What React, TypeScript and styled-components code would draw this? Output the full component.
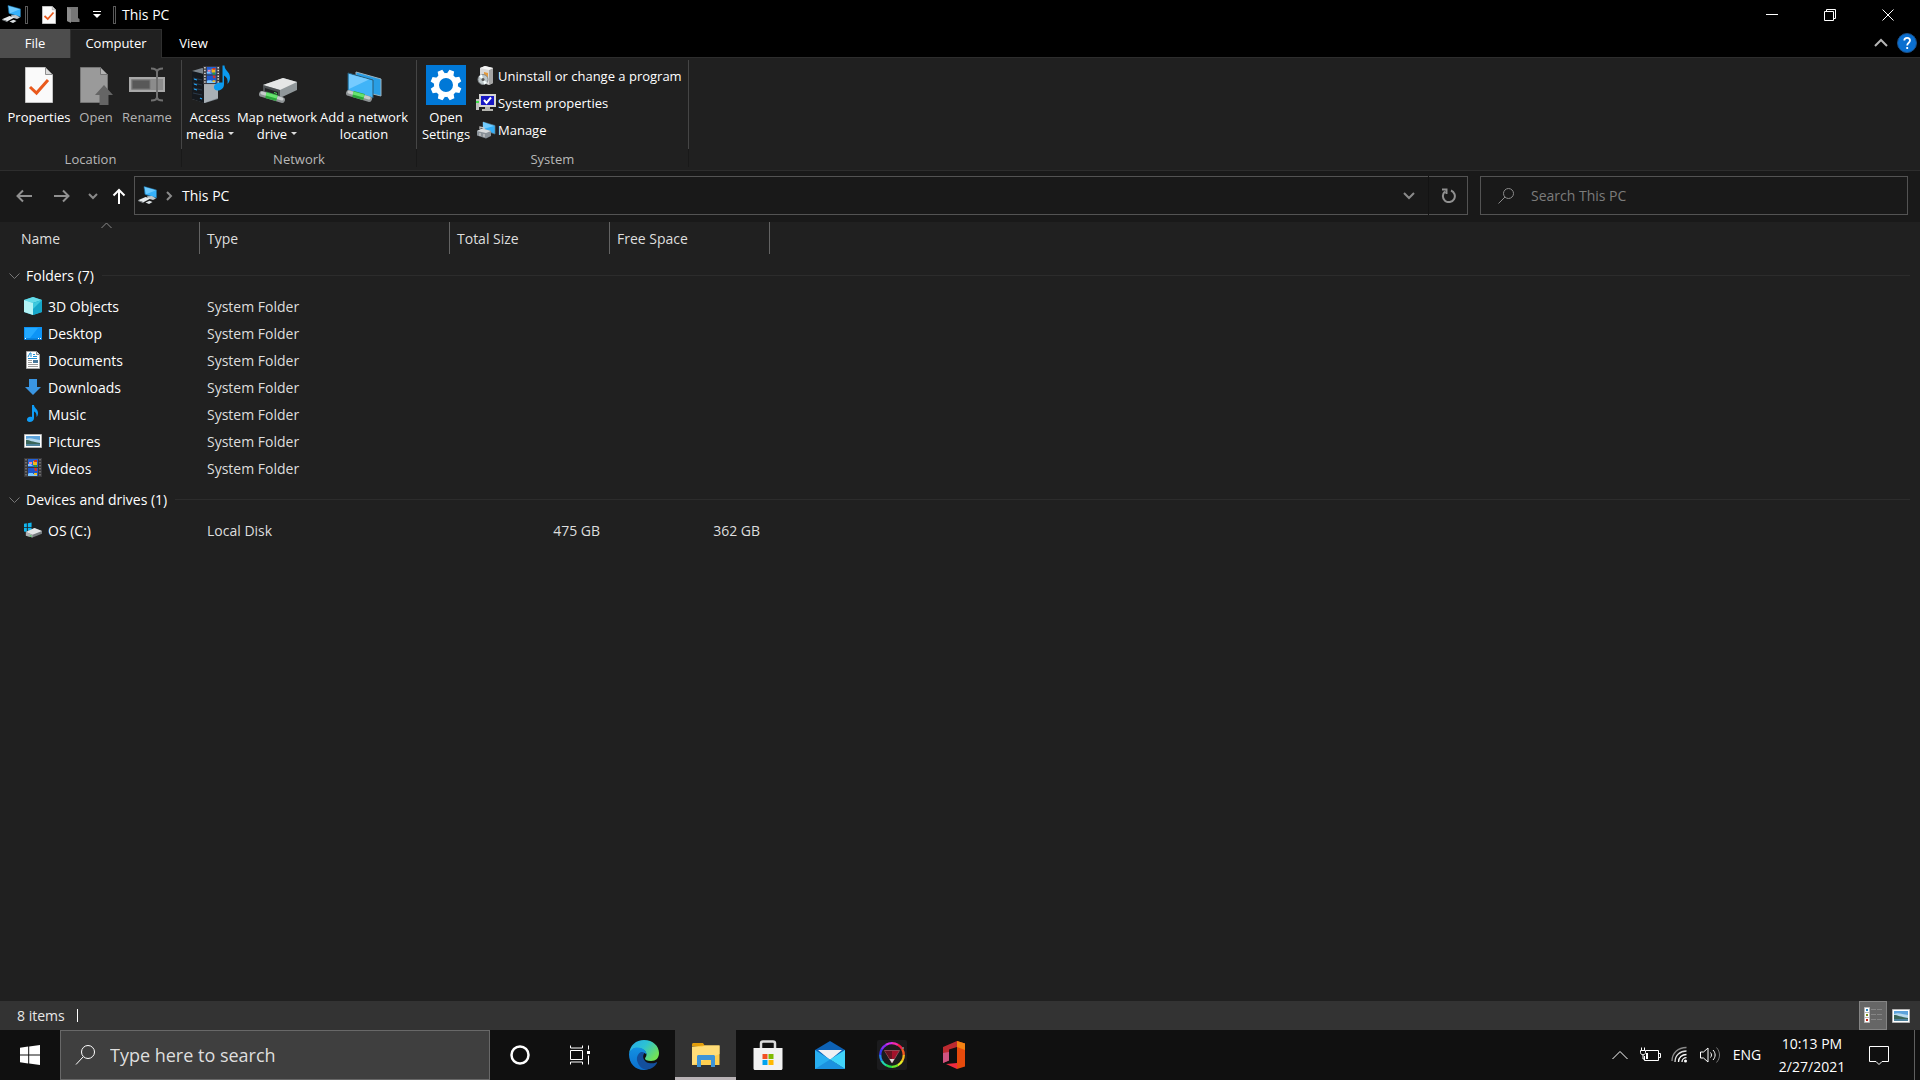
import React from "react";
import styled, { createGlobalStyle } from "styled-components";

const GlobalStyle = createGlobalStyle`
  *, *::before, *::after { box-sizing: border-box; }
  html, body { margin: 0; padding: 0; background: #202020; }
  body, button, input, table {
    font-family: "Open Sans", "Noto Sans", sans-serif;
    font-size: 14px;
    line-height: 20px;
    color: #ffffff;
  }
  button { background: none; border: 0; padding: 0; margin: 0; cursor: default; }
  svg { display: block; flex: none; }
`;

const Page = styled.div`
  min-height: 100vh;
  display: flex;
  flex-direction: column;
`;

/* ---------- title bar ---------- */

const TitleBar = styled.header`
  height: 29px;
  display: flex;
  align-items: center;
  background: #000000;
  padding: 0 3px 0 2px;
`;

const QuickDivider = styled.span`
  width: 3px;
  height: 18px;
  border: 1px solid #5a5a5a;
  margin: 0 6px 0 4px;
`;

const QuickButton = styled.button`
  width: 24px;
  height: 28px;
  display: flex;
  align-items: center;
  justify-content: center;
`;

const QuickTools = styled.div`
  display: flex;
  align-items: center;
  padding-left: 3px;
`;

const Title = styled.h1`
  flex: 1;
  margin: 0;
  font-size: 14px;
  font-weight: 400;
  line-height: 20px;
`;

const CaptionButton = styled.button`
  width: 58px;
  height: 28px;
  display: flex;
  align-items: center;
  justify-content: center;
`;

/* ---------- ribbon ---------- */

const TabRow = styled.nav`
  height: 28px;
  display: flex;
  background: #000000;
`;

const Tab = styled.button<{ $kind: "file" | "active" | "plain" }>`
  font-size: 13px;
  height: 29px;
  margin-bottom: -1px;
  padding-bottom: 2px;
  position: relative;
  width: ${(p) => (p.$kind === "file" ? 70 : p.$kind === "active" ? 92 : 63)}px;
  background: ${(p) => (p.$kind === "file" ? "#4d4d4d" : p.$kind === "active" ? "#202020" : "transparent")};
  border: ${(p) => (p.$kind === "active" ? "1px solid #2f2f2f" : "0")};
  border-bottom: 0;
`;

const TabTools = styled.div`
  margin-left: auto;
  padding-right: 3px;
  display: flex;
  align-items: center;
  gap: 9px;
`;

const Ribbon = styled.section`
  display: flex;
  height: 114px;
  background: #202020;
  border-top: 1px solid #2d2d2d;
  border-bottom: 1px solid #2d2d2d;
`;

const RibbonGroup = styled.div`
  display: flex;
  flex-direction: column;
`;

const GroupBody = styled.div<{ $start: number; $end: number }>`
  flex: 1;
  display: flex;
  padding: 0 ${(p) => p.$end}px 0 ${(p) => p.$start}px;
`;

const GroupLabel = styled.div`
  height: 21px;
  font-size: 13px;
  text-align: center;
  color: #b8b8b8;
`;

const Separator = styled.span`
  width: 1px;
  margin: 2px 0 3px;
  background: linear-gradient(#454545 0 89px, #191919 89px);
`;

const LargeButton = styled.button<{ $width: number; $disabled?: boolean }>`
  width: ${(p) => p.$width}px;
  padding-top: 7px;
  display: flex;
  flex-direction: column;
  align-items: center;
  gap: 4px;
  font-size: 13px;
  line-height: 17px;
  white-space: nowrap;
  color: ${(p) => (p.$disabled ? "#b4b4b4" : "#ffffff")};
`;

const Caret = styled.i`
  display: inline-block;
  vertical-align: 4px;
  margin-left: 4px;
  border: 3px solid transparent;
  border-top-color: #dddddd;
  border-bottom: 0;
`;

const SmallList = styled.div`
  display: flex;
  flex-direction: column;
  padding: 4px 0 0 4px;
`;

const SmallButton = styled.button`
  height: 27px;
  display: flex;
  align-items: center;
  gap: 2px;
  font-size: 13px;
  white-space: nowrap;
`;

/* ---------- address bar ---------- */

const AddressRow = styled.div`
  height: 51px;
  display: grid;
  grid-template-columns: auto minmax(0, 1334fr) minmax(0, 440fr);
  align-items: start;
  background: #191919;
  padding: 5px 12px 0 5px;
`;

const NavButtons = styled.div`
  display: flex;
`;

const NavButton = styled.button<{ $width: number }>`
  width: ${(p) => p.$width}px;
  height: 39px;
  display: flex;
  align-items: center;
  justify-content: center;
`;

const AddressBox = styled.div`
  height: 39px;
  display: flex;
  align-items: center;
  border: 1px solid #535353;
  padding-left: 3px;
`;

const Crumb = styled.button`
  height: 37px;
  display: flex;
  align-items: center;
`;

const CrumbArrow = styled.span`
  width: 25px;
  display: flex;
  justify-content: center;
`;

const AddressSpacer = styled.span`
  flex: 1;
`;

const RefreshCell = styled.div`
  border-left: 1px solid #131313;
  display: flex;
`;

const SearchBox = styled.label`
  height: 39px;
  margin-left: 12px;
  padding-left: 16px;
  display: flex;
  align-items: center;
  gap: 16px;
  border: 1px solid #535353;
`;

const PlainInput = styled.input<{ $hint: string; $size: number }>`
  flex: 1;
  min-width: 0;
  background: none;
  border: 0;
  outline: 0;
  padding: 0;
  font-size: ${(p) => p.$size}px;
  line-height: 24px;
  height: 24px;
  &::placeholder { color: ${(p) => p.$hint}; opacity: 1; }
`;

/* ---------- file list ---------- */

const Content = styled.main`
  flex: 1;
  background: #202020;
`;

const FileTable = styled.table`
  width: 100%;
  table-layout: fixed;
  border-collapse: collapse;
`;

const Col = styled.col<{ $width?: number }>`
  width: ${(p) => (p.$width ? `${p.$width}px` : "auto")};
`;

const HeadCell = styled.th`
  padding: 0 0 4px;
  font-weight: 400;
  text-align: left;
`;

const HeadButton = styled.button<{ $inset: number }>`
  width: 100%;
  height: 32px;
  padding: 2px 0 0 ${(p) => p.$inset}px;
  border-right: 1px solid #636363;
  color: #dedede;
  text-align: left;
  position: relative;
`;

const SortMark = styled.span`
  position: absolute;
  top: 0;
  left: 0;
  right: 0;
  display: flex;
  justify-content: center;
  padding-left: 14px;
`;

const GroupCell = styled.th`
  height: 35px;
  padding: 0 10px 0 9px;
  font-weight: 400;
  text-align: left;
`;

const GroupTitle = styled.button`
  width: 100%;
  display: flex;
  align-items: center;
  gap: 6px;
  &::after {
    content: "";
    flex: 1;
    height: 1px;
    margin-left: 2px;
    background: #2c2c2c;
  }
`;

const NameCell = styled.td`
  height: 27px;
  padding: 0 0 0 24px;
`;

const NameLine = styled.div`
  display: flex;
  align-items: center;
  gap: 6px;
  svg { margin-bottom: 2px; }
`;

const DataCell = styled.td<{ $right?: boolean }>`
  height: 27px;
  padding: 0 ${(p) => (p.$right ? 10 : 0)}px 0 ${(p) => (p.$right ? 0 : 7)}px;
  text-align: ${(p) => (p.$right ? "right" : "left")};
  color: #dedede;
`;

/* ---------- status bar ---------- */

const StatusBar = styled.footer`
  height: 29px;
  display: flex;
  align-items: center;
  background: #333333;
  padding: 0 5px 0 17px;
`;

const StatusText = styled.span`
  flex: 1;
  display: flex;
  align-items: center;
  gap: 12px;
  color: #e8e8e8;
  &::after {
    content: "";
    width: 1px;
    height: 13px;
    background: #ffffff;
  }
`;

const ViewButton = styled.button<{ $active?: boolean }>`
  width: 28px;
  height: 29px;
  display: flex;
  align-items: center;
  justify-content: center;
  background: ${(p) => (p.$active ? "#666666" : "transparent")};
  border: 1px solid ${(p) => (p.$active ? "#848484" : "transparent")};
`;

/* ---------- taskbar ---------- */

const Taskbar = styled.div`
  height: 50px;
  display: flex;
  align-items: stretch;
  background: #101010;
`;

const TaskButton = styled.button<{ $active?: boolean; $width: number }>`
  width: ${(p) => p.$width}px;
  display: flex;
  align-items: center;
  justify-content: center;
  background: ${(p) => (p.$active ? "#333333" : "transparent")};
  box-shadow: ${(p) => (p.$active ? "inset 0 -3px #b9b3b6" : "none")};
`;

const TaskSearch = styled.label`
  width: 430px;
  display: flex;
  align-items: center;
  gap: 14px;
  padding-left: 14px;
  background: #3f3f3f;
  border: 1px solid #686868;
`;

const Apps = styled.div`
  display: flex;
  gap: 1px;
  margin-left: 3px;
`;

const Tray = styled.div`
  display: flex;
  margin-left: auto;
`;

const TrayText = styled.button<{ $width: number }>`
  width: ${(p) => p.$width}px;
  display: flex;
  flex-direction: column;
  align-items: center;
  justify-content: center;
  gap: 3px;
  white-space: nowrap;
`;

const ShowDesktop = styled.button`
  width: 6px;
  margin-left: 11px;
  border-left: 1px solid #5f5f5f;
`;

/* ---------- icons ---------- */

const PcIcon = () => (
  <svg width="19" height="19" viewBox="0 0 19 19">
    <path d="M6 .5 18.500 4v8L7 8.400z" fill="#35b1fb" stroke="#276a94" strokeWidth=".7" />
    <path d="M6.500 1 18 4.300 8 8.200z" fill="#6ccaff" />
    <path d="M9 10.200 14 10l4 2.400-3 1.600-5-1.500z" fill="#bfc7cb" />
    <path d="M0 14.200 7.500 11l5 1.500-7 3.700z" fill="#e6eaec" />
    <path d="m7.500 16.400 4-1.600 3 1.200-3.500 2z" fill="#dce1e4" />
    <path d="m0 14.200 5.500 2v1L0 15z" fill="#8c9296" />
  </svg>
);

const PageShape = ({ dim }: { dim?: boolean }) => (
  <>
    <path d="M.5.5h20l7 7v28H.5z" fill={dim ? "#9a9a9a" : "#fafafa"} stroke={dim ? "#757575" : "#c4c4c4"} />
    <path d="M20.5.5v7h7z" fill={dim ? "#b4b4b4" : "#dcdcdc"} stroke={dim ? "#747474" : "#8e8e8e"} />
  </>
);

const PropertiesIcon = ({ small }: { small?: boolean }) => (
  <svg width={small ? 14 : 28} height={small ? 18 : 40} viewBox={small ? "0 0 28 36" : "0 -2 28 40"}>
    <PageShape />
    <path d="m5 20 6.5 6L23 13" fill="none" stroke="#e9591c" strokeWidth={small ? 3.5 : 3} />
  </svg>
);

const OpenSmallIcon = () => (
  <svg width="13" height="18" viewBox="0 0 13 18">
    <path d="M0 1h11v11l1.500 1v3H5L0 15z" fill="#777" />
    <path d="M0 1 4 3v14L0 15z" fill="#8d8d8d" />
  </svg>
);

const OpenIcon = () => (
  <svg width="34" height="40" viewBox="-1 -2 34 40">
    <PageShape dim />
    <path d="M24 18 33 28h-4.500v10h-9V28H15z" fill="#656565" />
  </svg>
);

const RenameIcon = () => (
  <svg width="36" height="40" viewBox="0 0 36 40">
    <path d="M1 13h34v13H1z" fill="#8c8c8c" stroke="#a8a8a8" strokeWidth="2" />
    <path d="M3 15h18v9H3z" fill="#585858" stroke="#777" />
    <path d="M28 6v27M22 3.500c3 0 6 1 6 3.500 0-2.500 3-3.500 6-3.500M22 35.500c3 0 6-1 6-3.500 0 2.500 3 3.500 6 3.500" fill="none" stroke="#707070" strokeWidth="2" />
  </svg>
);

const Film = ({ holes }: { holes: string }) => (
  <>
    <path d="M0 0h18v19H0z" fill="#39383b" />
    <path d="M4 1h10v8H4z" fill="#2461d6" />
    <path d="M4 10h10v8H4z" fill="#1e57cc" />
    <path d="M4 6h3l2 2H4zM5 15h4v1h4v2H4v-2z" fill="#7cc7ff" />
    <path d="M9 3h4v4H9z" fill="#f1b51c" />
    <path d="M10 2h3v2h-3zM10 10h3v3h-2z" fill="#d83422" />
    <path d="M5 4h3v2H5z" fill="#f288a8" />
    <path d="M10 7h3v2h-3z" fill="#2f9b36" />
    <path d="M10 15h3v2h-3z" fill="#eebc25" />
    <path d="M2 1v18M16 1v18" stroke={holes} strokeWidth="1.500" strokeDasharray="1.500 1.500" />
  </>
);

const MediaIcon = () => (
  <svg width="40" height="40" viewBox="0 0 40 40">
    <path d="M2 6 12 3l16 4v27l-13 4-13-4z" fill="#7b848c" />
    <path d="m2 6 12 3v29L2 34z" fill="#15191e" />
    <path d="m14 9 14-3v27l-14 5z" fill="#a9b0b5" />
    <path d="m3 13 9 2M3 18l9 2M3 23l9 2M3 28l9 2" stroke="#2b3a49" strokeWidth="1.200" />
    <path d="m4 14 3 1m-3 4 3 1m-3 4 3 1m3 8 2 1" stroke="#22a9ff" strokeWidth="1.300" />
    <g transform="translate(13 1) scale(.95)"><Film holes="#e8e8e8" /></g>
    <path d="M32.500.5h2c0 5 5.500 6 5.500 12 0 3-1 5-2.500 6.500.7-4-.5-7-3.500-8.500v9c0 3.500-3 6-6 6-2.500 0-4.500-1.500-4-4 .5-3 4.500-4.500 8.500-4z" fill="#0b9bf0" />
  </svg>
);

const Cable = () => (
  <>
    <path d="m3 27 20 6" stroke="#8e9395" strokeWidth="6" strokeLinecap="round" />
    <path d="m3 26 20 6" stroke="#c7cbcc" strokeWidth="3" strokeLinecap="round" />
    <path d="m7 28 11 3" stroke="#2ba83b" strokeWidth="6" />
    <path d="m7 27 11 3" stroke="#67e36f" strokeWidth="3" />
  </>
);

const DriveIcon = () => (
  <svg width="40" height="40" viewBox="-1 0 40 40">
    <path d="m5 20 20-7 14 4v8l-17 8-17-5z" fill="#90979a" />
    <path d="m5 20 20-7 14 4-17 8z" fill="#e5e6e6" />
    <path d="m5 20 17 5v8L5 28z" fill="#4c5052" />
    <path d="m7 23 13 4v3L7 26z" fill="#202224" />
    <path d="m16 27 3 1v1l-3-1z" fill="#50e05c" />
    <g transform="translate(1 2)"><Cable /></g>
  </svg>
);

const NetworkIcon = () => (
  <svg width="40" height="40" viewBox="-2 -1 40 40">
    <path d="m10 6 25 7v17l-25-6z" fill="#299ee5" stroke="#9bb3c0" />
    <path d="m2 7 25 7v18L2 25z" fill="#40b4f8" stroke="#2b5a75" />
    <path d="m3 8 20 5.500L3 23z" fill="#75cbff" />
    <Cable />
  </svg>
);

const SettingsIcon = () => (
  <svg width="40" height="40" viewBox="0 0 40 40">
    <path d="M0 0h40v40H0z" fill="#0078d7" />
    <circle cx="20" cy="20" r="9.500" fill="none" stroke="#fff" strokeWidth="5" />
    {[0, 45, 90, 135, 180, 225, 270, 315].map((a) => (
      <path key={a} d="m16.500 9 1-4.500h5l1 4.500z" fill="#fff" transform={`rotate(${a + 22} 20 20)`} />
    ))}
  </svg>
);

const UninstallIcon = () => (
  <svg width="20" height="20" viewBox="0 0 20 20">
    <path d="m4 2 5-2 8 2v15l-4 2-9-3z" fill="#d9d9d9" />
    <path d="m13 4 4-2v15l-4 2z" fill="#a5a5a5" />
    <path d="m4 2 9 2 4-2-8-2z" fill="#f5f5f5" />
    <path d="m8 6 4 1v5l-4-1z" fill="#e49a3d" />
    <circle cx="7" cy="13.500" r="5" fill="#bfc8cb" stroke="#858b8e" />
    <path d="m7 13.500-4-3a5 5 0 0 1 3-2zM7 13.500l4 3a5 5 0 0 1-3 2z" fill="#f7ffff" />
    <circle cx="7" cy="13.500" r="1.500" fill="#555" />
  </svg>
);

const SystemIcon = () => (
  <svg width="20" height="20" viewBox="0 0 20 20">
    <path d="M0 6h3v11H0z" fill="#bebebe" /><path d="M0 8h3v2H0z" fill="#3dde48" />
    <path d="M3 1h17v13H3z" fill="#d5d5d1" /><path d="M5 3h13v9H5z" fill="#1717c4" />
    <path d="M9 14h5v2h3v2H6v-2h3z" fill="#b5b5b0" />
    <path d="m8 7 2.500 3L15 4.500" fill="none" stroke="#fff" strokeWidth="2" />
  </svg>
);

const ManageIcon = () => (
  <svg width="20" height="20" viewBox="0 0 20 20">
    <path d="m7 2 12 3.500V14L7 10z" fill="#33aff8" stroke="#617b89" strokeWidth=".7" />
    <path d="m7 2 11 4-11 3z" fill="#72ccff" />
    <path d="m1 11 5-2.500 9 2.500v5l-5 2.500-9-3z" fill="#899198" />
    <path d="m1 11 5-2.500 9 2.500-5 2z" fill="#d9dcde" />
    <path d="M4 9V7l4 1v2m-4 3v3m4-2v3" fill="none" stroke="#cfcfcf" strokeWidth="1.200" />
  </svg>
);

type StrokeProps = { d: string; w?: number; h?: number; color?: string; weight?: number };
const Stroke = ({ d, w = 16, h = 16, color = "#fff", weight = 1 }: StrokeProps) => (
  <svg width={w} height={h} viewBox={`0 0 ${w} ${h}`} fill="none" stroke={color} strokeWidth={weight}>
    <path d={d} />
  </svg>
);

const HelpIcon = () => (
  <svg width="20" height="20" viewBox="0 0 20 20">
    <circle cx="10" cy="10" r="9.500" fill="#0a6fd0" stroke="#1c4f86" />
    <path d="M7.300 7.500C7.300 4 13 4 13 7.500c0 2.200-2.800 2.300-2.800 5M10.200 14v2" fill="none" stroke="#fff" strokeWidth="1.800" />
  </svg>
);

const ObjectsIcon = () => (
  <svg width="18" height="18" viewBox="0 0 18 18">
    <path d="m0 3 9-3 9 3v12l-9 3-9-3z" fill="#22b2cf" />
    <path d="m0 3 9-3 9 3-9 3z" fill="#66dce9" />
    <path d="m0 3 9 3v12l-9-3z" fill="#b3f3f5" />
    <path d="m9 6 9-3v12l-9 3z" fill="#15a6c9" />
    <path d="m9 6 9-3-9 9z" fill="#3fc9de" />
  </svg>
);

const DesktopIcon = () => (
  <svg width="18" height="18" viewBox="0 0 18 18">
    <path d="M0 3h18v13H0z" fill="#0d94f6" /><path d="M1 4h13L6 14H1z" fill="#24a9ff" />
    <path d="M0 14.500h18V16H0z" fill="#0576cd" /><path d="M1 14.500h1m12 0h1m1 0h1" stroke="#fff" />
  </svg>
);

const DocumentIcon = () => (
  <svg width="18" height="18" viewBox="0 0 18 18">
    <path d="M2.500.5h10l3 3v14h-13z" fill="#fff" stroke="#aaa" /><path d="M12.500.5v3h3" fill="#ddd" stroke="#888" />
    <path d="m4 6 2-4h1v4M9 3.500h2M9 5.500h4M4 7.500h9" fill="none" stroke="#1c8fd6" />
    <path d="M4 9.500h4m-4 2h4m-4 2h10m-10 2h10" stroke="#9c9c9c" /><path d="M9 9h5v3H9z" fill="#47779a" />
  </svg>
);

const DownloadIcon = () => (
  <svg width="18" height="18" viewBox="0 0 18 18"><path d="M5 1h8v8h4l-8 8-8-8h4z" fill="#3a96e3" /></svg>
);

const MusicIcon = () => (
  <svg width="18" height="18" viewBox="0 0 18 18">
    <path d="M8 0h2c0 3 4 4 4 8 0 2-.5 3-1.500 4 .3-3-.5-4.500-2.500-5.500V13c0 2.500-2 4-4.500 4C2.500 17 2 13 5 12c1-.4 2-.4 3 0z" fill="#0f9cf5" />
  </svg>
);

const PictureIcon = () => (
  <svg width="18" height="18" viewBox="0 0 18 18">
    <path d="M.5 2.500h17v13H.5z" fill="#fff" stroke="#b4b4b4" /><path d="M2 4h14v10H2z" fill="#5da3dc" />
    <path d="M2 7c4-2 8 0 14 1v3H2z" fill="#b7d9ee" /><path d="M2 8c4 0 6 2 14 3v1H2z" fill="#3b665a" />
    <path d="M2 12h14v2H2z" fill="#4d819c" />
  </svg>
);

const VideoIcon = () => (
  <svg width="18" height="19" viewBox="0 0 18 19"><Film holes="#7d7d7d" /></svg>
);

const DiskIcon = () => (
  <svg width="18" height="18" viewBox="1 0 19 18">
    <path d="M0 2.500 4 2v4H0zM5 2l4-1v5H5zM0 7h4v4l-4-.5zM5 7h4v5l-4-1z" fill="#10b6ef" />
    <path d="m3 11 9-4 8 3v3l-10 4-7-2z" fill="#777c7f" /><path d="m3 11 9-4 8 3-10 4z" fill="#e4e6e7" />
    <path d="m3 11 7 3v3l-7-2z" fill="#aeb1b3" /><path d="m7 15 2 .6" stroke="#35c64d" strokeWidth="1.200" />
  </svg>
);

const DetailsIcon = () => (
  <svg width="18" height="18" viewBox="0 0 18 18">
    <path d="M.5.5h5v5h-5zm0 5h5v5h-5zm0 5h5v5h-5z" fill="#fff" stroke="#b9b9b9" />
    <path d="M2 2h2v2H2z" fill="#2a84bd" /><path d="M2 7h2v2H2z" fill="#7d8f1f" /><path d="M2 12h2v2H2z" fill="#c4271c" />
    <path d="M7 2.500h5m1 0h5m-11 5h5m1 0h5m-11 5h5m1 0h5" stroke="#858585" />
  </svg>
);

const WindowsIcon = () => (
  <svg width="20" height="20" viewBox="0 0 20 20" fill="#fff">
    <path d="m0 2.800 8.200-1.200v7.900H0zM9.200 1.400 20 0v9.500H9.200zM0 10.500h8.200v7.900L0 17.200zM9.200 10.500H20V20L9.200 18.500z" />
  </svg>
);

const CortanaIcon = () => (
  <svg width="20" height="20" viewBox="0 0 20 20"><circle cx="10" cy="10" r="8.500" fill="none" stroke="#fff" strokeWidth="2.500" /></svg>
);

const TaskViewIcon = () => (
  <svg width="20" height="20" viewBox="0 0 20 20" fill="none" stroke="#fff">
    <path d="M.5 5.500h12v9H.5zM.5.5V3h12V.5M.5 19.500V17h12v2.500M18.500.5v4m0 6v9" />
    <path d="M17 6h3v3h-3z" fill="#fff" stroke="none" />
  </svg>
);

const EdgeIcon = () => (
  <svg width="30" height="30" viewBox="0 0 30 30">
    <defs>
      <linearGradient id="edgeTop" x1="0" y1="0" x2="1" y2="0.6">
        <stop offset="0" stopColor="#27a9e9" /><stop offset=".5" stopColor="#2cc2d4" /><stop offset="1" stopColor="#72e257" />
      </linearGradient>
      <linearGradient id="edgeLow" x1="0" y1="0" x2="0" y2="1">
        <stop offset="0" stopColor="#1391e2" /><stop offset="1" stopColor="#0c6fce" />
      </linearGradient>
    </defs>
    <path d="M0 14C1 5 7 0 15 0c9 0 15 6 15 13 0 5-3 8-8 8-4 0-6-1-6-2.500 0-1 1.500-1.500 1.500-4C17.500 11 13 8 8.500 8 4 8 1 11 0 14z" fill="url(#edgeTop)" />
    <path d="M0 14C1 10 4 7.500 8.500 7.500c5 0 9 3 9 7-1-1.500-3-2-4.500-1-2 1-3.500 4-2 7.500 1.800 4 6 6.500 11 6-2 2-4.500 3-7 3C6 30 0 23.500 0 14z" fill="url(#edgeLow)" />
    <path d="M12 12c-3.500 2-5 6-3.500 10 1.500 4.500 5 7.500 9 7.500 5 0 8.500-3 10.500-6.500.5-1-.5-1-1-.5-5 2-11 .5-12.500-4-.7-2-.2-4 1-5.500-1-1-2-1.300-3.500-1z" fill="#134f9c" />
  </svg>
);

const ExplorerIcon = () => (
  <svg width="28" height="24" viewBox="0 0 28 24">
    <path d="M0 1.500C0 .6.6 0 1.500 0H11l2 3H0z" fill="#e29d0a" /><path d="M0 3.500 13 2.500h14.500V22H0z" fill="#ffcf50" />
    <path d="M0 4h10l3-1.500h14.500V11L0 22z" fill="#ffdd78" />
    <path d="M5 24V13.500C5 12.600 5.600 12 6.500 12h15c.9 0 1.500.6 1.500 1.500V24h-4v-7H9v7z" fill="#3e94d7" />
  </svg>
);

const StoreIcon = () => (
  <svg width="30" height="30" viewBox="0 0 30 30">
    <path d="M8 10V3.500c0-1.200.8-2 2-2h10c1.200 0 2 .8 2 2V10" fill="none" stroke="#dcdcdc" strokeWidth="2.500" />
    <path d="M.5 8h29v20.500c0 .8-.7 1.500-1.500 1.500H2c-.8 0-1.500-.7-1.500-1.500z" fill="#f2f2f2" />
    <path d="M9.500 14h5v5h-5z" fill="#f25022" /><path d="M15.500 14h5v5h-5z" fill="#7fba00" />
    <path d="M9.500 20h5v5h-5z" fill="#00a4ef" /><path d="M15.500 20h5v5h-5z" fill="#ffb900" />
  </svg>
);

const MailIcon = () => (
  <svg width="30" height="30" viewBox="0 0 30 30">
    <path d="M0 10 15 1l15 9v9H0z" fill="#0d62b5" /><path d="M3 10h24L15 20z" fill="#f0f0f3" />
    <path d="m0 10 30 19H0z" fill="#28aef0" /><path d="m30 10-15 9.500L30 29z" fill="#41d4fa" />
    <path d="m15 19.500L30 29H0z" fill="#1b91df" />
  </svg>
);

const wheel: [number, string][] = [
  [0, "#f32ca9"], [30, "#f51d42"], [60, "#f35a20"], [90, "#f5b81c"], [120, "#e7ec24"], [150, "#6be329"],
  [180, "#24d84e"], [210, "#20d6b1"], [240, "#2086ec"], [270, "#3734ef"], [300, "#842af0"], [330, "#d22af0"],
];

const ColorWheelIcon = () => (
  <svg width="30" height="30" viewBox="0 0 30 30">
    <rect width="30" height="30" rx="2" fill="#1b1b1d" />
    {wheel.map(([angle, color]) => (
      <path key={angle} d="M15 3.200A11.800 11.800 0 0 1 21.100 4.900" fill="none" stroke={color} strokeWidth="2.300" transform={`rotate(${angle} 15 15)`} />
    ))}
    <path d="M7.500 10.500h15L15 23z" fill="#a3112a" stroke="#8d4a55" /><path d="M8 11h7v11z" fill="#651421" />
    <path d="m12.500 19 2.500 4 2.500-4z" fill="#ddd" />
    <circle cx="26" cy="8" r="1" fill="#888" />
  </svg>
);

const OfficeIcon = () => (
  <svg width="24" height="30" viewBox="0 0 24 30">
    <path d="m1 7 14-6v6L7 9.500v11L1 23z" fill="#bd2a30" />
    <path d="M1 13 7 12v8.500L1 23z" fill="#cf5481" />
    <path d="m15 1 8 2.500v23L15 29z" fill="#e64a0c" /><path d="m15 1 8 2.500V10l-8-3z" fill="#f38213" />
    <path d="m4 24 11-1v6z" fill="#f02b40" />
  </svg>
);

const BatteryIcon = () => (
  <svg width="21" height="16" viewBox="0 0 21 16" fill="none" stroke="#fff">
    <path d="M6 3.500h12.500v10H4.500V9M19 6.500h1.500v4H19" /><path d="M6 6h2v6H6z" fill="#fff" stroke="none" />
    <path d="M.5 3.500h5v2c0 3-5 3-5 0zM1.500.5v3m3-3v3M3 7.500V12h2" />
  </svg>
);

const WifiIcon = () => (
  <svg width="18" height="18" viewBox="0 0 18 18" fill="none" strokeWidth="1.300">
    <path d="M1 15C1 7 7 1.500 15.500 1.500" stroke="#8a8a8a" /><path d="M4 16C4 9.500 9 5 15.500 5" stroke="#e0e0e0" />
    <path d="M7.500 16c0-4.500 3.500-7.500 8-7.500M11 16c0-2.500 2-4.300 4.500-4.300" stroke="#fff" /><circle cx="14.500" cy="15" r="1.500" fill="#fff" />
  </svg>
);

const VolumeIcon = () => (
  <svg width="21" height="18" viewBox="0 0 21 18" fill="none" stroke="#fff">
    <path d="M.5 6h3L8 2v14l-4.500-4h-3zM10.500 6.500c1.300 1.500 1.300 3.500 0 5M13 4c2.800 3 2.800 7 0 10" />
    <path d="M16.500 1.500c4 4.500 4 10.500 0 15" stroke="#777" />
  </svg>
);

const SearchIcon = () => (
  <svg width="18" height="18" viewBox="0 0 18 18" fill="none" stroke="#8a8a8a">
    <circle cx="11.500" cy="6.500" r="5" /><path d="m8 10-6.500 6.500" />
  </svg>
);

/* ---------- data ---------- */

const folders: { name: string; icon: React.ReactNode }[] = [
  { name: "3D Objects", icon: <ObjectsIcon /> },
  { name: "Desktop", icon: <DesktopIcon /> },
  { name: "Documents", icon: <DocumentIcon /> },
  { name: "Downloads", icon: <DownloadIcon /> },
  { name: "Music", icon: <MusicIcon /> },
  { name: "Pictures", icon: <PictureIcon /> },
  { name: "Videos", icon: <VideoIcon /> },
];

const GroupRow = ({ label }: { label: string }) => (
  <tr>
    <GroupCell colSpan={5} scope="rowgroup">
      <GroupTitle aria-expanded="true">
        <Stroke d="M.5 2.500 5.500 7.500l5-5" w={11} h={10} color="#777" />
        {label}
      </GroupTitle>
    </GroupCell>
  </tr>
);

type FileRowProps = { icon: React.ReactNode; name: string; type: string; total?: string; free?: string };
const FileRow = ({ icon, name, type, total, free }: FileRowProps) => (
  <tr>
    <NameCell><NameLine>{icon}{name}</NameLine></NameCell>
    <DataCell>{type}</DataCell>
    <DataCell $right>{total}</DataCell>
    <DataCell $right>{free}</DataCell>
    <td />
  </tr>
);

export default function App() {
  return (
    <Page>
      <GlobalStyle />
      <TitleBar>
        <PcIcon />
        <QuickDivider />
        <QuickTools>
          <QuickButton aria-label="Properties"><PropertiesIcon small /></QuickButton>
          <QuickButton aria-label="Open"><OpenSmallIcon /></QuickButton>
          <QuickButton aria-label="Customize toolbar">
            <svg width="8" height="8" viewBox="0 0 8 8" fill="#fff"><path d="M0 0h8v1H0zM0 3h8L4 7z" /></svg>
          </QuickButton>
        </QuickTools>
        <QuickDivider />
        <Title>This PC</Title>
        <CaptionButton aria-label="Minimize"><Stroke d="M0 5.500h12" w={12} h={12} /></CaptionButton>
        <CaptionButton aria-label="Restore"><Stroke d="M.5 2.500h9v9h-9zM2.500 2V.5h9v9H10" w={12} h={12} /></CaptionButton>
        <CaptionButton aria-label="Close"><Stroke d="m.5.5 11 11m0-11-11 11" w={12} h={12} /></CaptionButton>
      </TitleBar>

      <TabRow>
        <Tab $kind="file">File</Tab>
        <Tab $kind="active">Computer</Tab>
        <Tab $kind="plain">View</Tab>
        <TabTools>
          <button aria-label="Minimize the ribbon"><Stroke d="m1 8 6-6 6 6" w={14} h={10} color="#b5b5b5" weight={2} /></button>
          <button aria-label="Help"><HelpIcon /></button>
        </TabTools>
      </TabRow>

      <Ribbon>
        <RibbonGroup>
          <GroupBody $start={5} $end={6}>
            <LargeButton $width={68}><PropertiesIcon />Properties</LargeButton>
            <LargeButton $width={46} $disabled><OpenIcon />Open</LargeButton>
            <LargeButton $width={56} $disabled><RenameIcon />Rename</LargeButton>
          </GroupBody>
          <GroupLabel>Location</GroupLabel>
        </RibbonGroup>
        <Separator />
        <RibbonGroup>
          <GroupBody $start={3} $end={7}>
            <LargeButton $width={50}><MediaIcon /><span>Access<br />media<Caret /></span></LargeButton>
            <LargeButton $width={84}><DriveIcon /><span>Map network<br />drive<Caret /></span></LargeButton>
            <LargeButton $width={90}><NetworkIcon /><span>Add a network<br />location</span></LargeButton>
          </GroupBody>
          <GroupLabel>Network</GroupLabel>
        </RibbonGroup>
        <Separator />
        <RibbonGroup>
          <GroupBody $start={3} $end={6}>
            <LargeButton $width={52}><SettingsIcon /><span>Open<br />Settings</span></LargeButton>
            <SmallList>
              <SmallButton><UninstallIcon />Uninstall or change a program</SmallButton>
              <SmallButton><SystemIcon />System properties</SmallButton>
              <SmallButton><ManageIcon />Manage</SmallButton>
            </SmallList>
          </GroupBody>
          <GroupLabel>System</GroupLabel>
        </RibbonGroup>
        <Separator />
      </Ribbon>

      <AddressRow>
        <NavButtons>
          <NavButton $width={37} aria-label="Back"><Stroke d="M16 8H1m6-5.500L1.500 8 7 13.500" color="#909090" weight={2} /></NavButton>
          <NavButton $width={40} aria-label="Forward"><Stroke d="M0 8h15M9 2.500 14.500 8 9 13.500" color="#909090" weight={2} /></NavButton>
          <NavButton $width={22} aria-label="Recent locations"><Stroke d="m1 2 4 4 4-4" w={10} h={8} color="#8a8a8a" weight={2} /></NavButton>
          <NavButton $width={30} aria-label="Up"><Stroke d="M7 16V2M1.500 7.500 7 2l5.500 5.500" w={14} color="#fff" weight={2} /></NavButton>
        </NavButtons>
        <AddressBox>
          <PcIcon />
          <CrumbArrow><Stroke d="m1 1 4 4-4 4" w={7} h={10} color="#8a8a8a" weight={2} /></CrumbArrow>
          <Crumb>This PC</Crumb>
          <AddressSpacer />
          <NavButton $width={38} aria-label="Previous locations"><Stroke d="m1 2 5 5 5-5" w={12} h={9} color="#8a8a8a" weight={2} /></NavButton>
          <RefreshCell>
            <NavButton $width={38} aria-label="Refresh">
              <Stroke d="M10 2.500a6 6 0 1 1-6 1M1 1.500h4.500V6" w={15} h={15} color="#909090" weight={2} />
            </NavButton>
          </RefreshCell>
        </AddressBox>
        <SearchBox>
          <SearchIcon />
          <PlainInput $hint="#7c7c7c" $size={14} type="text" placeholder="Search This PC" aria-label="Search This PC" />
        </SearchBox>
      </AddressRow>

      <Content>
        <FileTable>
          <colgroup>
            <Col $width={200} /><Col $width={250} /><Col $width={160} /><Col $width={160} /><Col />
          </colgroup>
          <thead>
            <tr>
              <HeadCell scope="col">
                <HeadButton $inset={21}>
                  Name
                  <SortMark><Stroke d="m.5 6 5-5 5 5" w={11} h={7} color="#8a8a8a" /></SortMark>
                </HeadButton>
              </HeadCell>
              <HeadCell scope="col"><HeadButton $inset={7}>Type</HeadButton></HeadCell>
              <HeadCell scope="col"><HeadButton $inset={7}>Total Size</HeadButton></HeadCell>
              <HeadCell scope="col"><HeadButton $inset={7}>Free Space</HeadButton></HeadCell>
              <td />
            </tr>
          </thead>
          <tbody>
            <GroupRow label="Folders (7)" />
            {folders.map((f) => <FileRow key={f.name} icon={f.icon} name={f.name} type="System Folder" />)}
          </tbody>
          <tbody>
            <GroupRow label="Devices and drives (1)" />
            <FileRow icon={<DiskIcon />} name="OS (C:)" type="Local Disk" total="475 GB" free="362 GB" />
          </tbody>
        </FileTable>
      </Content>

      <StatusBar>
        <StatusText>8 items</StatusText>
        <ViewButton $active aria-label="Details view"><DetailsIcon /></ViewButton>
        <ViewButton aria-label="Large thumbnails view"><PictureIcon /></ViewButton>
      </StatusBar>

      <Taskbar>
        <TaskButton $width={60} aria-label="Start"><WindowsIcon /></TaskButton>
        <TaskSearch>
          <Stroke d="M1 20.500 8 13M13 1.500a6.500 6.500 0 1 1 0 13 6.500 6.500 0 0 1 0-13z" w={21} h={22} weight={1} />
          <PlainInput $hint="#dedede" $size={18} type="text" placeholder="Type here to search" aria-label="Type here to search" />
        </TaskSearch>
        <TaskButton $width={60} aria-label="Cortana"><CortanaIcon /></TaskButton>
        <TaskButton $width={60} aria-label="Task View"><TaskViewIcon /></TaskButton>
        <Apps>
          <TaskButton $width={61} aria-label="Microsoft Edge"><EdgeIcon /></TaskButton>
          <TaskButton $width={61} $active aria-label="File Explorer"><ExplorerIcon /></TaskButton>
          <TaskButton $width={61} aria-label="Microsoft Store"><StoreIcon /></TaskButton>
          <TaskButton $width={61} aria-label="Mail"><MailIcon /></TaskButton>
          <TaskButton $width={61} aria-label="Color picker"><ColorWheelIcon /></TaskButton>
          <TaskButton $width={61} aria-label="Office"><OfficeIcon /></TaskButton>
        </Apps>
        <Tray>
          <TaskButton $width={30} aria-label="Show hidden icons"><Stroke d="m.5 9 7.500-7.500L15.500 9" w={16} h={10} weight={1} /></TaskButton>
          <TaskButton $width={30} aria-label="Battery"><BatteryIcon /></TaskButton>
          <TaskButton $width={30} aria-label="Network"><WifiIcon /></TaskButton>
          <TaskButton $width={30} aria-label="Volume"><VolumeIcon /></TaskButton>
          <TrayText $width={44}>ENG</TrayText>
          <TrayText $width={86}><span>10:13 PM</span><span>2/27/2021</span></TrayText>
          <TaskButton $width={48} aria-label="Notifications"><Stroke d="M.5 1.500h19v15H13L10 19.500 7 16.500H.5z" w={20} h={20} /></TaskButton>
          <ShowDesktop aria-label="Show desktop" />
        </Tray>
      </Taskbar>
    </Page>
  );
}
